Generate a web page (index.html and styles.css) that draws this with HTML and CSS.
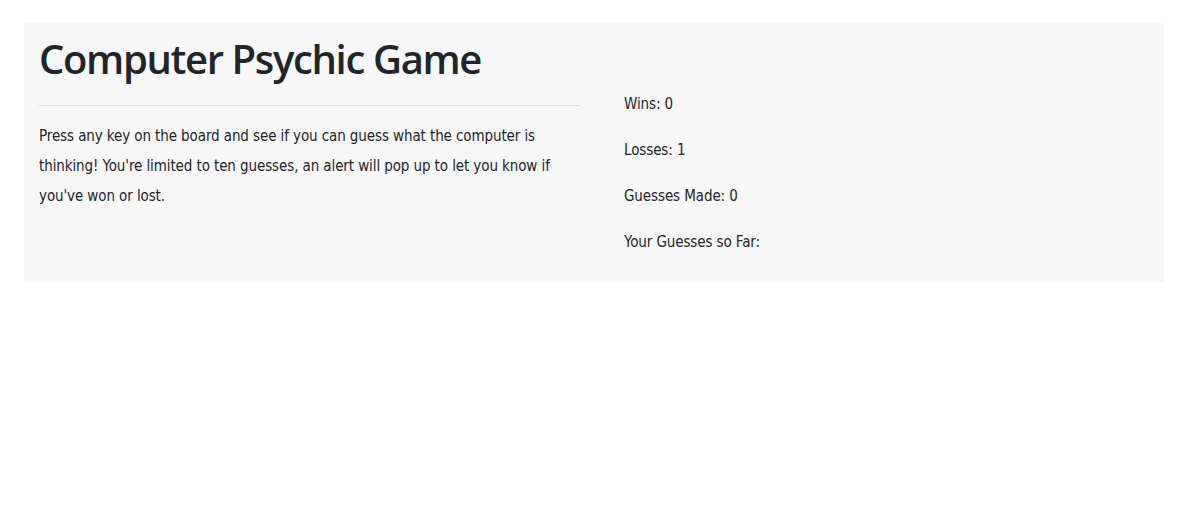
FILE: index.html
```html
<!DOCTYPE html>
<html>
<head>
<meta charset="utf-8">
<link rel="stylesheet" href="styles.css">
</head>
<body>
<div class="container">
  <div class="jumbo">
    <div class="col left">
      <h1 class="title">Computer Psychic Game</h1>
      <hr class="rule">
      <p class="desc">Press any key on the board and see if you can guess what the computer is thinking! You're limited to ten guesses, an alert will pop up to let you know if you've won or lost.</p>
    </div>
    <div class="col right">
      <p class="stat">Wins: 0</p>
      <p class="stat">Losses: 1</p>
      <p class="stat">Guesses Made: 0</p>
      <p class="stat">Your Guesses so Far:</p>
    </div>
  </div>
</div>
</body>
</html>
```
FILE: styles.css
```css
html, body { margin: 0; padding: 0; background: #fff; }
body {
  font-family: "DejaVu Sans Condensed", "Liberation Sans", sans-serif;
  color: #212529;
  font-size: 15px;
  letter-spacing: -0.1px;
}
.container {
  width: 1140px;
  margin: 23px 0 0 24px;
}
.jumbo {
  background: #f7f7f7;
  display: grid;
  grid-template-columns: 570px 570px;
  height: 259px;
}
.col { padding: 0 15px; }
.title {
  font-family: "Open Sans", "Noto Sans", sans-serif;
  font-weight: 600;
  font-size: 40px;
  line-height: 48px;
  margin: 12px 0 0;
  letter-spacing: -1.35px;
}
.rule {
  border: 0;
  border-top: 1px solid #dcdcdc;
  margin: 22px 0 15px;
  width: 540px;
}
.desc {
  margin: 0;
  line-height: 30px;
}
.right { padding-left: 30px; padding-top: 66px; }
.stat { margin: 0 0 16px; line-height: 30px; }
```
